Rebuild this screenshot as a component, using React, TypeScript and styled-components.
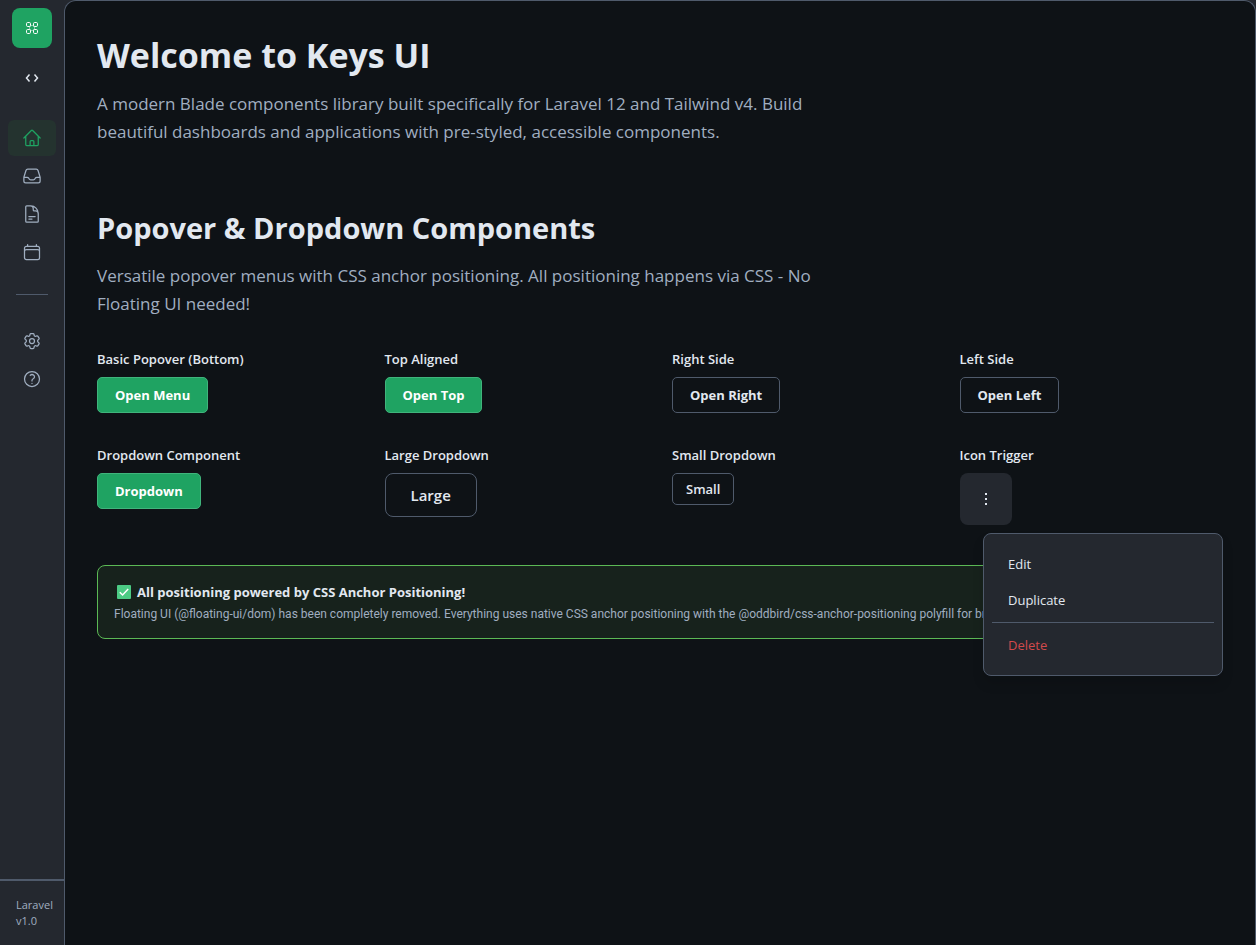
import React from 'react';
import styled, { createGlobalStyle, css } from 'styled-components';
import {
  HiOutlineHome,
  HiOutlineInbox,
  HiOutlineDocumentText,
  HiOutlineCalendar,
  HiOutlineCog6Tooth,
  HiOutlineQuestionMarkCircle,
} from 'react-icons/hi2';

const color = {
  body: '#0e1216',
  surface: '#24282f',
  border: '#4f5a6b',
  text: '#e2e8f0',
  muted: '#a0aec0',
  accent: '#1fa362',
  accentBorder: '#40b47c',
  danger: '#d24a4c',
  success: '#5bb955',
};

const GlobalStyle = createGlobalStyle`
  *, *::before, *::after { box-sizing: border-box; }
  body {
    margin: 0;
    background: ${color.surface};
    color: ${color.text};
    font-family: "Segoe UI", "Open Sans", "Noto Sans", sans-serif;
    font-size: 13px;
    line-height: 20px;
  }
  h1, h2, h3, p, ul { margin: 0; padding: 0; }
  button { font-family: inherit; cursor: pointer; }
`;

const Shell = styled.div`
  display: flex;
  min-height: 100vh;
`;

const Sidebar = styled.aside`
  display: flex;
  flex-direction: column;
  flex: none;
  width: 64px;
`;

const SidebarTop = styled.div`
  display: flex;
  flex-direction: column;
  align-items: center;
  gap: 12px;
  padding: 8px 0 24px;
`;

const IconButton = styled.button<{ $brand?: boolean }>`
  display: flex;
  align-items: center;
  justify-content: center;
  width: 40px;
  height: ${(p) => (p.$brand ? 40 : 36)}px;
  padding: 0;
  border: 0;
  border-radius: 8px;
  color: ${(p) => (p.$brand ? '#ffffff' : color.text)};
  background: ${(p) => (p.$brand ? color.accent : 'transparent')};
`;

const NavGroup = styled.nav`
  display: flex;
  flex-direction: column;
  gap: 2px;
  padding: 0 8px;
`;

const NavLink = styled.a<{ $active?: boolean }>`
  display: flex;
  align-items: center;
  justify-content: center;
  height: 36px;
  border-radius: 6px;
  color: ${(p) => (p.$active ? color.accent : color.muted)};
  background: ${(p) => (p.$active ? '#24332f' : 'transparent')};
`;

const SidebarDivider = styled.hr`
  width: 32px;
  height: 1px;
  margin: 24px auto 28px;
  border: 0;
  background: ${color.border};
`;

const SidebarFooter = styled.footer`
  margin-top: auto;
  padding: 16px 8px 16px 16px;
  border-top: 2px solid ${color.border};
  color: ${color.muted};
  font-size: 11px;
  line-height: 16px;
`;

const Main = styled.main`
  flex: 1;
  min-width: 0;
  padding: 34px 32px 32px;
  border: 1px solid ${color.border};
  border-bottom: 0;
  border-radius: 12px 12px 0 0;
  background: ${color.body};
`;

const Title = styled.h1`
  margin-bottom: 15px;
  font-size: 34px;
  line-height: 40px;
  font-weight: 700;
`;

const SectionTitle = styled.h2`
  margin: 64px 0 16px;
  font-size: 29px;
  line-height: 36px;
  font-weight: 700;
`;

const Lead = styled.p`
  max-width: 768px;
  color: ${color.muted};
  font-size: 17px;
  line-height: 28px;
`;

const DemoGrid = styled.div`
  display: grid;
  grid-template-columns: repeat(4, minmax(0, 1fr));
  gap: 32px 24px;
  margin: 31px 0 40px;
`;

const DemoCell = styled.section`
  position: relative;
  display: flex;
  flex-direction: column;
  align-items: flex-start;
  gap: 8px;
`;

const DemoLabel = styled.h3`
  font-size: 13px;
  line-height: 20px;
  font-weight: 600;
`;

const sizes = {
  sm: css`
    height: 32px;
    padding: 0 13px;
    font-size: 13px;
    border-radius: 5px;
  `,
  md: css`
    height: 36px;
    padding: 0 17px;
    font-size: 13px;
    border-radius: 5px;
  `,
  lg: css`
    height: 44px;
    padding: 0 25px;
    font-size: 15px;
    border-radius: 8px;
  `,
};

const Button = styled.button<{ $solid?: boolean; $size: keyof typeof sizes }>`
  border: 1px solid ${(p) => (p.$solid ? color.accentBorder : color.border)};
  background: ${(p) => (p.$solid ? color.accent : 'transparent')};
  color: ${(p) => (p.$solid ? '#ffffff' : color.text)};
  font-weight: ${(p) => (p.$size === 'md' ? 700 : 600)};
  line-height: 20px;
  ${(p) => sizes[p.$size]}
`;

const KebabButton = styled.button`
  display: flex;
  align-items: center;
  justify-content: center;
  width: 52px;
  height: 52px;
  padding: 0;
  border: 0;
  border-radius: 8px;
  background: ${color.surface};
  color: ${color.text};
`;

const Menu = styled.div`
  position: absolute;
  top: calc(100% + 8px);
  right: 0;
  z-index: 10;
  width: 240px;
  padding: 12px 8px;
  border: 1px solid ${color.border};
  border-radius: 8px;
  background: ${color.surface};
  box-shadow: 0 8px 12px rgba(0, 0, 0, 0.12);
`;

const MenuItem = styled.button<{ $danger?: boolean }>`
  display: block;
  width: 100%;
  height: 36px;
  padding: 0 16px;
  border: 0;
  background: transparent;
  color: ${(p) => (p.$danger ? color.danger : color.text)};
  font-size: 13px;
  line-height: 20px;
  text-align: left;
`;

const MenuDivider = styled.hr`
  height: 1px;
  margin: 4px 0;
  border: 0;
  background: ${color.border};
`;

const Banner = styled.section`
  padding: 16px;
  overflow: hidden;
  border: 1px solid ${color.success};
  border-radius: 8px;
  background: #17221c;
`;

const BannerTitle = styled.h3`
  display: flex;
  align-items: center;
  gap: 6px;
  margin-bottom: 4px;
  padding-left: 3px;
  font-size: 13px;
  line-height: 20px;
  font-weight: 700;
`;

const BannerText = styled.p`
  color: ${color.muted};
  font-family: "Segoe UI", Roboto, "Open Sans", sans-serif;
  font-size: 12px;
  line-height: 16px;
  white-space: nowrap;
`;

const LogoIcon = () => (
  <svg width="14" height="14" viewBox="0 0 14 14" fill="none" stroke="currentColor" aria-hidden="true">
    <rect x="1.5" y="1.5" width="4" height="4" rx="1.2" />
    <rect x="8.5" y="1.5" width="4" height="4" rx="1.2" />
    <rect x="1.5" y="8.5" width="4" height="4" rx="1.2" />
    <rect x="8.5" y="8.5" width="4" height="4" rx="1.2" />
    <rect x="4.5" y="4.5" width="5" height="5" rx="2" strokeOpacity="0.5" />
  </svg>
);

const CodeIcon = () => (
  <svg width="16" height="16" viewBox="0 0 16 16" fill="none" stroke="currentColor" strokeWidth="1.5" aria-hidden="true">
    <path d="M5.5 4.5 2.5 8l3 3.5M10.5 4.5l3 3.5-3 3.5" />
  </svg>
);

const DotsIcon = () => (
  <svg width="16" height="16" viewBox="0 0 16 16" fill="currentColor" aria-hidden="true">
    <path d="M7 2h2v2H7zM7 7h2v2H7zM7 12h2v2H7z" />
  </svg>
);

const CheckIcon = () => (
  <svg width="14" height="14" viewBox="0 0 14 14" aria-hidden="true">
    <rect width="14" height="14" rx="1" fill="#4ccb84" />
    <path d="M2.8 7.2 5.6 10l5.6-6" fill="none" stroke="#ffffff" strokeWidth="1.5" />
  </svg>
);

const primaryNav = [
  { label: 'Home', Icon: HiOutlineHome, active: true },
  { label: 'Inbox', Icon: HiOutlineInbox },
  { label: 'Documents', Icon: HiOutlineDocumentText },
  { label: 'Calendar', Icon: HiOutlineCalendar },
];

const secondaryNav = [
  { label: 'Settings', Icon: HiOutlineCog6Tooth },
  { label: 'Help', Icon: HiOutlineQuestionMarkCircle },
];

const demos: { label: string; text: string; solid?: boolean; size: keyof typeof sizes }[] = [
  { label: 'Basic Popover (Bottom)', text: 'Open Menu', solid: true, size: 'md' },
  { label: 'Top Aligned', text: 'Open Top', solid: true, size: 'md' },
  { label: 'Right Side', text: 'Open Right', size: 'md' },
  { label: 'Left Side', text: 'Open Left', size: 'md' },
  { label: 'Dropdown Component', text: 'Dropdown', solid: true, size: 'md' },
  { label: 'Large Dropdown', text: 'Large', size: 'lg' },
  { label: 'Small Dropdown', text: 'Small', size: 'sm' },
];

export default function App() {
  return (
    <>
      <GlobalStyle />
      <Shell>
        <Sidebar>
          <SidebarTop>
            <IconButton type="button" $brand aria-label="Keys UI">
              <LogoIcon />
            </IconButton>
            <IconButton type="button" aria-label="Toggle sidebar">
              <CodeIcon />
            </IconButton>
          </SidebarTop>
          <NavGroup aria-label="Primary">
            {primaryNav.map(({ label, Icon, active }) => (
              <NavLink key={label} href="#" $active={active} aria-label={label}>
                <Icon size={20} />
              </NavLink>
            ))}
          </NavGroup>
          <SidebarDivider />
          <NavGroup aria-label="Secondary">
            {secondaryNav.map(({ label, Icon }) => (
              <NavLink key={label} href="#" aria-label={label}>
                <Icon size={20} />
              </NavLink>
            ))}
          </NavGroup>
          <SidebarFooter>Laravel v1.0</SidebarFooter>
        </Sidebar>
        <Main>
          <Title>Welcome to Keys UI</Title>
          <Lead>
            A modern Blade components library built specifically for Laravel 12 and Tailwind v4. Build beautiful
            dashboards and applications with pre-styled, accessible components.
          </Lead>
          <SectionTitle>Popover &amp; Dropdown Components</SectionTitle>
          <Lead>
            Versatile popover menus with CSS anchor positioning. All positioning happens via CSS - No Floating UI
            needed!
          </Lead>
          <DemoGrid>
            {demos.map((demo) => (
              <DemoCell key={demo.label}>
                <DemoLabel>{demo.label}</DemoLabel>
                <Button type="button" $solid={demo.solid} $size={demo.size}>
                  {demo.text}
                </Button>
              </DemoCell>
            ))}
            <DemoCell>
              <DemoLabel>Icon Trigger</DemoLabel>
              <KebabButton type="button" aria-label="More actions" aria-expanded="true">
                <DotsIcon />
              </KebabButton>
              <Menu>
                <MenuItem type="button">Edit</MenuItem>
                <MenuItem type="button">Duplicate</MenuItem>
                <MenuDivider />
                <MenuItem type="button" $danger>
                  Delete
                </MenuItem>
              </Menu>
            </DemoCell>
          </DemoGrid>
          <Banner>
            <BannerTitle>
              <CheckIcon />
              All positioning powered by CSS Anchor Positioning!
            </BannerTitle>
            <BannerText>
              Floating UI (@floating-ui/dom) has been completely removed. Everything uses native CSS anchor positioning
              with the @oddbird/css-anchor-positioning polyfill for browsers.
            </BannerText>
          </Banner>
        </Main>
      </Shell>
    </>
  );
}
